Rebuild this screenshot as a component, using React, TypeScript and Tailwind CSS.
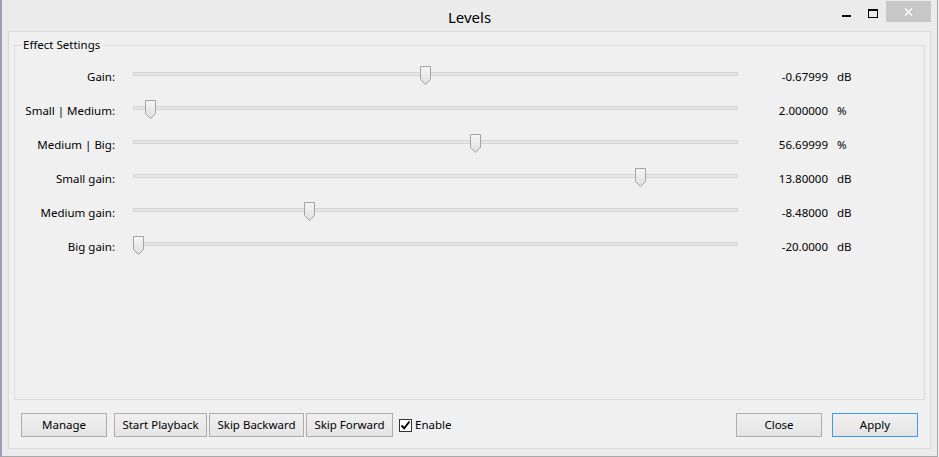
import React from "react";

// slider rows: frac = thumb position along the track (0..1)
const rows = [
  { label: "Gain:", value: "-0.67999", unit: "dB", frac: 0.483 },
  { label: "Small | Medium:", value: "2.000000", unit: "%", frac: 0.02 },
  { label: "Medium | Big:", value: "56.69999", unit: "%", frac: 0.567 },
  { label: "Small gain:", value: "13.80000", unit: "dB", frac: 0.845 },
  { label: "Medium gain:", value: "-8.48000", unit: "dB", frac: 0.288 },
  { label: "Big gain:", value: "-20.0000", unit: "dB", frac: 0 },
];

const TRACK_W = 605;
const THUMB_W = 11;

const font = { fontFamily: '"Noto Sans", "Open Sans", sans-serif' };

export default function App() {
  return (
    <div className="w-[939px] h-[457px] bg-[#f0f0f0] flex" style={font}>
      <div className="w-[938px] h-[457px] bg-[#ebebeb] border-l-2 border-r border-b border-l-[#9c9cbc] border-r-[#a9a9a9] border-b-[#a9a9a9] flex flex-col px-[6px]">
        {/* Title bar */}
        <div className="h-[31px] grid grid-cols-[1fr_auto_1fr] text-black">
          <div />
          <div className="text-[15px] leading-[20px] pt-[7px]">Levels</div>
          <div className="flex justify-end items-start">
            <div className="w-[26px] h-[22px] flex items-start justify-center pt-[15px]">
              <div className="w-[9px] h-[2px] bg-black" />
            </div>
            <div className="w-[27px] h-[22px] flex items-start justify-center pt-[9px]">
              <div className="w-[10px] h-[9px] border border-black border-t-2" />
            </div>
            <div className="w-[45px] h-[21px] mt-[1px] bg-[#c7c7c7] flex items-center justify-center">
              <svg width="9" height="8" viewBox="0 0 9 8">
                <path d="M1 0.5L8 7.5M8 0.5L1 7.5" stroke="#fff" strokeWidth="1.4" />
              </svg>
            </div>
          </div>
        </div>

        {/* Client area */}
        <div className="h-[418px] bg-[#f0f0f0] border border-[#d9d9d9] flex flex-col px-[5px]">
          <fieldset className="mt-[5px] h-[363px] border border-[#dcdcdc] pt-[4px]">
            <legend className="ml-[6px] px-[2px] text-[11.5px] leading-[16px] text-black">
              Effect Settings
            </legend>
            {rows.map((r, i) => (
              <div key={r.label} className="h-[34px] flex items-center text-[11.5px] leading-[16px] text-black">
                <div className="w-[100px] text-right pt-[5px] whitespace-nowrap">{r.label}</div>
                <div className="ml-[18px] w-[605px] h-[4px] relative bg-[#e6e6e6] border border-[#d6d6d6]">
                  <svg
                    width="11"
                    height="19"
                    viewBox="0 0 11 19"
                    className="absolute top-[-7px]"
                    style={{ left: Math.round(r.frac * (TRACK_W - THUMB_W)) - 1 }}
                  >
                    <defs>
                      <linearGradient id={`tg${i}`} x1="0" y1="0" x2="0" y2="1">
                        <stop offset="0" stopColor="#f6f6f6" />
                        <stop offset="1" stopColor="#dedede" />
                      </linearGradient>
                    </defs>
                    <path
                      d="M0.5 0.5H10.5V13.5L5.5 18.5L0.5 13.5Z"
                      fill={`url(#tg${i})`}
                      stroke="#a3a3a3"
                    />
                  </svg>
                </div>
                <div className="w-[90px] text-right pt-[5px]">{r.value}</div>
                <div className="ml-[9px] pt-[5px]">{r.unit}</div>
              </div>
            ))}
          </fieldset>

          {/* Buttons */}
          <div className="mt-[13px] flex items-center px-[7px] text-[11.5px] text-black">
            <Btn w="w-[86px]">Manage</Btn>
            <div className="w-[7px]" />
            <Btn w="w-[93px]">Start Playback</Btn>
            <div className="w-[2px]" />
            <Btn w="w-[95px]">Skip Backward</Btn>
            <div className="w-[2px]" />
            <Btn w="w-[87px]">Skip Forward</Btn>
            <label className="ml-[6px] flex items-center gap-[3px]">
              <span className="w-[13px] h-[13px] bg-white border border-[#333] flex items-center justify-center">
                <svg width="11" height="11" viewBox="0 0 11 11">
                  <path d="M1.5 5.5L4.2 8.3L9.5 1.5" fill="none" stroke="#000" strokeWidth="1.9" />
                </svg>
              </span>
              <span className="leading-[16px]">Enable</span>
            </label>
            <div className="flex-1" />
            <Btn w="w-[86px]">Close</Btn>
            <div className="w-[10px]" />
            <Btn w="w-[86px]" primary>
              Apply
            </Btn>
          </div>
        </div>
      </div>
    </div>
  );
}

function Btn({
  children,
  w,
  primary = false,
}: {
  children: React.ReactNode;
  w: string;
  primary?: boolean;
}) {
  return (
    <div
      className={`${w} h-[24px] flex items-center justify-center border bg-gradient-to-b from-[#f0f0f0] to-[#e5e5e5] whitespace-nowrap ${
        primary ? "border-[#3c9bef]" : "border-[#adadad]"
      }`}
    >
      {children}
    </div>
  );
}
